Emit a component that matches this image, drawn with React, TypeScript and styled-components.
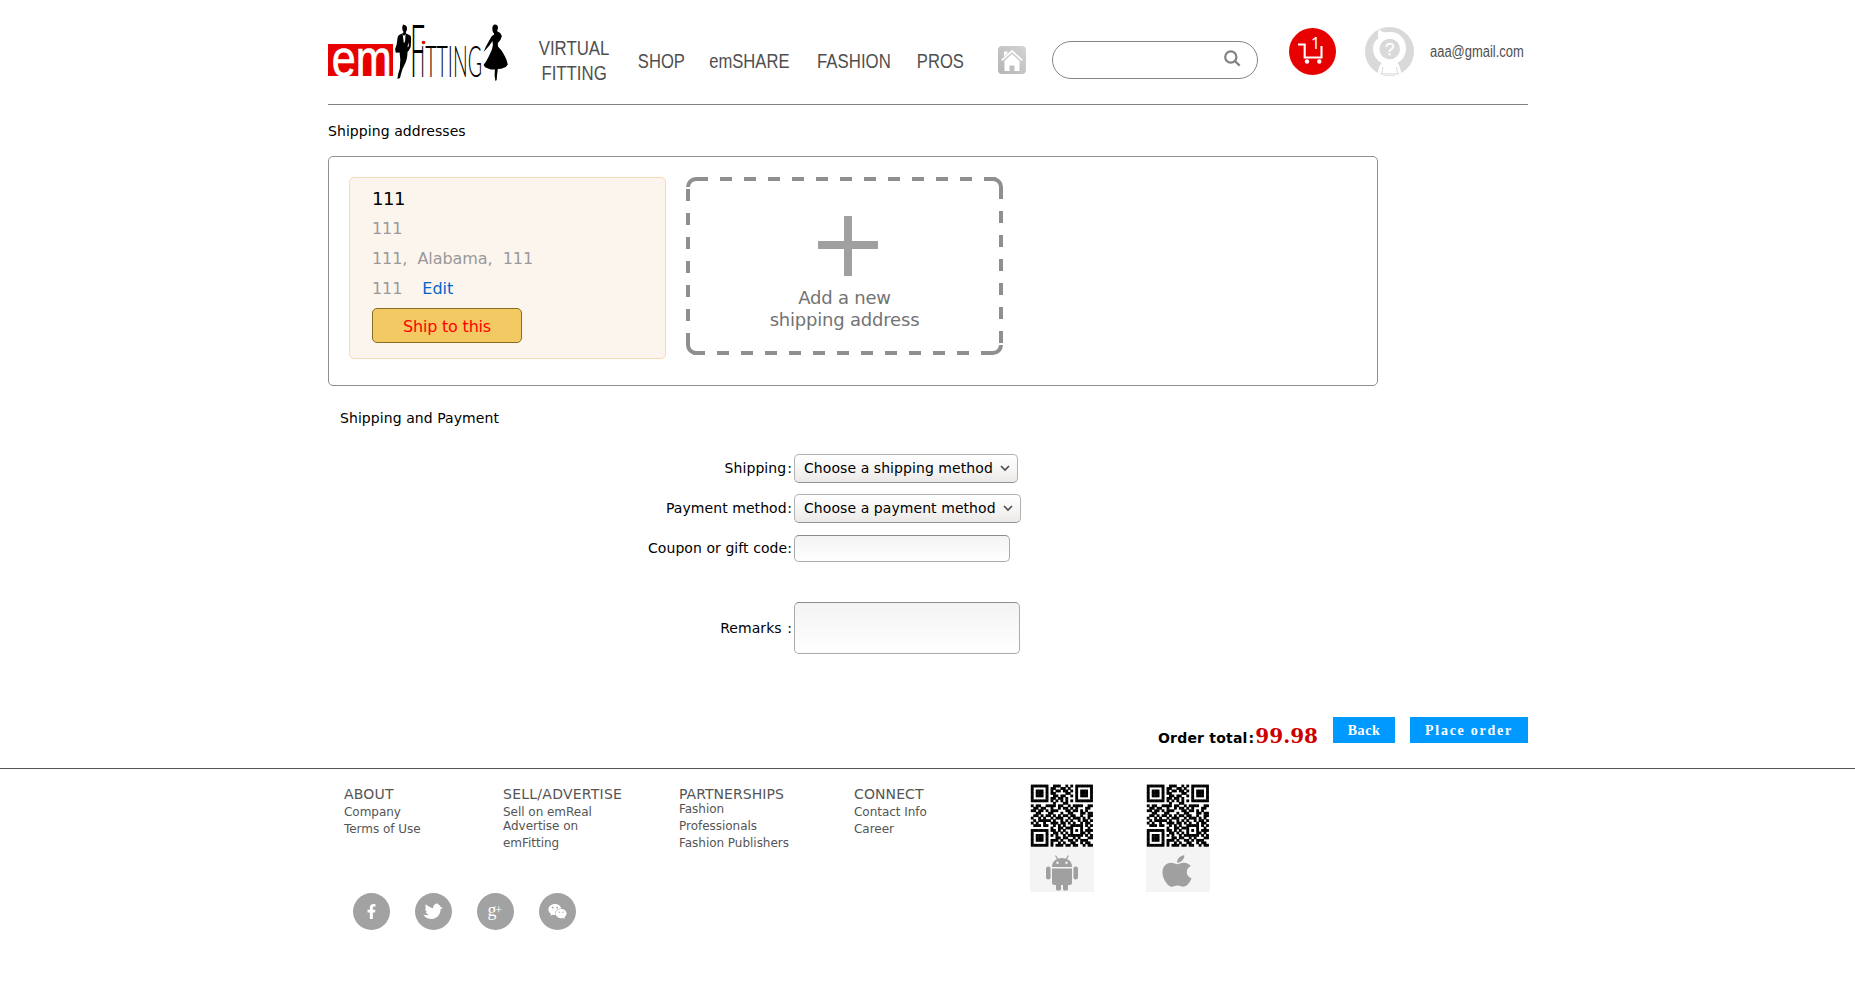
import React from "react";
import styled, { createGlobalStyle } from "styled-components";
import { FaApple, FaFacebookF, FaWeixin } from "react-icons/fa";

const GlobalStyle = createGlobalStyle`
  *, *::before, *::after { box-sizing: border-box; }
  body {
    margin: 0;
    background: #fff;
    color: #000;
    font-family: "DejaVu Sans", sans-serif;
    font-size: 14px;
    letter-spacing: 0.07px;
  }
  a { color: inherit; text-decoration: none; }
`;

const Container = styled.div`
  width: 1200px;
  margin: 0 auto;
  position: relative;
  left: 0.5px;
`;

const Header = styled.header`
  display: flex;
  align-items: flex-start;
  height: 105px;
  border-bottom: 1px solid #828282;
  & > * { flex-shrink: 0; }
`;

const LogoLink = styled.a`
  display: block;
  margin-top: 22px;
  width: 184px;
  height: 60px;
`;

const Nav = styled.nav`
  display: flex;
  align-items: flex-start;
  width: 486px;
  font-family: "Liberation Sans", sans-serif;
  font-size: 20px;
  line-height: 25px;
  letter-spacing: 0;
  color: #4f4f4f;
`;

const NavLink = styled.a<{ $left: number; $width: number; $top?: number }>`
  display: flex;
  justify-content: center;
  flex-shrink: 0;
  margin: ${(p) => p.$top ?? 49}px 0 0 ${(p) => p.$left}px;
  width: ${(p) => p.$width}px;
  text-align: center;
  white-space: nowrap;
`;

const Condensed = styled.span<{ $scale?: number; $origin?: string }>`
  display: block;
  flex-shrink: 0;
  transform: scaleX(${(p) => p.$scale ?? 0.83});
  transform-origin: ${(p) => p.$origin ?? "center"};
`;

const HomeLink = styled.a`
  display: block;
  width: 28px;
  height: 28px;
  margin-top: 46px;
`;

const SearchBox = styled.label`
  display: flex;
  align-items: center;
  justify-content: flex-end;
  width: 206px;
  height: 38px;
  margin: 41px 0 0 26px;
  padding: 0 16px 3px 0;
  border: 1px solid #858585;
  border-radius: 19px;
`;

const SearchInput = styled.input`
  flex: 1;
  min-width: 0;
  margin-left: 16px;
  border: 0;
  outline: 0;
  background: none;
`;

const CartLink = styled.a`
  position: relative;
  display: block;
  width: 47px;
  height: 47px;
  margin: 28px 0 0 31px;
`;

const CartCount = styled.span`
  position: absolute;
  left: 22px;
  top: 5px;
  color: #fff;
  font-family: "Noto Sans", sans-serif;
  font-size: 16px;
  line-height: 20px;
`;

const AvatarLink = styled.a`
  display: block;
  width: 49px;
  height: 49px;
  margin: 27px 0 0 29px;
`;

const Email = styled.a`
  width: 95px;
  margin: 40px 0 0 16px;
  font-family: "Liberation Sans", sans-serif;
  font-size: 16px;
  line-height: 24px;
  letter-spacing: 0;
  color: #4f4f4f;
`;

const SectionTitle = styled.h2<{ $indent?: number; $top: number }>`
  margin: ${(p) => p.$top}px 0 0 ${(p) => p.$indent ?? 0}px;
  font-size: 14px;
  line-height: 20px;
  font-weight: 400;
`;

const AddressPanel = styled.section`
  display: flex;
  align-items: flex-start;
  gap: 20px;
  width: 1050px;
  height: 230px;
  margin-top: 15px;
  padding: 20px;
  border: 1px solid #909090;
  border-radius: 5px;
`;

const AddressCard = styled.article`
  width: 317px;
  height: 182px;
  padding: 6px 22px;
  background: #fcf5ee;
  border: 1px solid #fbd8b4;
  border-radius: 5px;
  letter-spacing: -0.2px;
`;

const AddressName = styled.p`
  margin: 0;
  font-size: 18px;
  line-height: 30px;
  letter-spacing: -0.4px;
`;

const AddressLine = styled.p`
  margin: 0;
  font-size: 16px;
  line-height: 30px;
  letter-spacing: -0.06px;
  color: #999;
  white-space: pre;
`;

const EditLink = styled.a`
  margin-left: 20px;
  color: #0066cc;
`;

const ShipButton = styled.button`
  display: block;
  width: 150px;
  height: 35px;
  margin: 4px 0 0;
  padding: 2px 0 0;
  border: 1px solid #8a6d22;
  border-radius: 5px;
  background: #f3c963;
  color: #f00;
  font: 16px/31px "DejaVu Sans", sans-serif;
  letter-spacing: -0.2px;
`;

const NewAddress = styled.button`
  position: relative;
  display: flex;
  flex-direction: column;
  align-items: center;
  width: 317px;
  height: 178px;
  padding: 39px 0 0;
  border: 0;
  border-radius: 10px;
  background: #fff;
  color: #737373;
  font: 18px/22px "DejaVu Sans", sans-serif;
  letter-spacing: -0.2px;
`;

const DashedOutline = styled.svg`
  position: absolute;
  inset: 0;
`;

const PlusIcon = styled.svg`
  display: block;
  width: 60px;
  height: 60px;
  margin: 0 0 11px 7px;
`;

const Form = styled.form`
  margin-top: 20px;
`;

const FormRow = styled.div<{ $height?: number }>`
  display: flex;
  align-items: center;
  height: ${(p) => p.$height ?? 40}px;
`;

const Label = styled.label`
  width: 466px;
  padding-right: 2px;
  text-align: right;
  line-height: 20px;
`;

const Colon = styled.span<{ $gap?: number }>`
  margin-left: ${(p) => p.$gap ?? 0}px;
`;

const SelectBox = styled.div<{ $width: number }>`
  display: flex;
  align-items: center;
  justify-content: space-between;
  width: ${(p) => p.$width}px;
  height: 29px;
  padding: 0 7px 0 9px;
  border: 1px solid #b2b2b2;
  border-bottom-color: #939393;
  border-radius: 5px;
  background: linear-gradient(#fff, #f6f5f4 55%, #eae9e7);
  white-space: nowrap;
`;

const TextInput = styled.input`
  width: 216px;
  height: 27px;
  margin: 1px 0 0;
  border: 1px solid #ababab;
  border-top-color: #8c8c8c;
  border-radius: 5px;
  background: linear-gradient(#f3f3f3, #fff);
`;

const Remarks = styled.textarea`
  display: block;
  width: 226px;
  height: 52px;
  border: 1px solid #ababab;
  border-top-color: #8c8c8c;
  border-radius: 5px;
  background: linear-gradient(#f3f3f3, #fff);
  resize: none;
`;

const OrderBar = styled.div`
  display: flex;
  align-items: flex-start;
  justify-content: flex-end;
  height: 51px;
  margin-top: 29px;
`;

const OrderTotal = styled.p`
  display: flex;
  align-items: baseline;
  margin: 3px 15px 0 0;
  font-weight: 700;
  line-height: 32px;
  letter-spacing: 0.2px;
`;

const Amount = styled.strong`
  margin-left: 1px;
  color: #c00;
  font-family: "DejaVu Serif", serif;
  font-size: 20px;
  letter-spacing: 0;
`;

const ActionButton = styled.button<{ $width: number; $gap?: number; $tracking: number }>`
  width: ${(p) => p.$width}px;
  height: 26px;
  margin: 0 0 0 ${(p) => p.$gap ?? 0}px;
  padding: 1px 0 0;
  border: 0;
  background: #09f;
  color: #fff;
  font: 700 14px/25px "Liberation Serif", serif;
  letter-spacing: ${(p) => p.$tracking}px;
`;

const Footer = styled.footer`
  border-top: 1px solid #555;
`;

const FooterColumns = styled.div`
  display: flex;
  align-items: flex-start;
  height: 124px;
  padding-left: 16px;
  color: #555;
`;

const FooterColumn = styled.section<{ $width: number }>`
  width: ${(p) => p.$width}px;
  padding-top: 15px;
`;

const FooterTitle = styled.h3<{ $tracking?: number }>`
  margin: 0;
  font-size: 14px;
  line-height: 20px;
  font-weight: 400;
  letter-spacing: ${(p) => p.$tracking ?? 0.1}px;
`;

const FooterLinks = styled.div<{ $top?: number }>`
  margin-top: ${(p) => p.$top ?? 0}px;
`;

const FooterLink = styled.a<{ $pull?: number }>`
  display: block;
  margin-top: -${(p) => p.$pull ?? 0}px;
  font-size: 12px;
  line-height: 17px;
  letter-spacing: -0.03px;
  white-space: nowrap;
`;

const AppCard = styled.div`
  width: 64px;
  margin: 15px 52px 0 0;
`;

const QrCode = styled.svg`
  display: block;
  width: 64px;
  height: 63px;
`;

const Platform = styled.div`
  display: flex;
  justify-content: center;
  height: 45px;
  background: #f4f4f4;
  color: #a0a0a0;
`;

const SocialRow = styled.div`
  display: flex;
  gap: 25px;
  padding-left: 24.5px;
`;

const SocialLink = styled.a`
  display: flex;
  align-items: center;
  justify-content: center;
  width: 37px;
  height: 37px;
  border-radius: 50%;
  background: #a2a2a2;
  color: #fff;
`;

const LogoArt = styled.svg`
  display: block;
  overflow: visible;
`;

const Logo = () => (
  <LogoArt width="184" height="60" viewBox="0 0 184 60">
    <rect x="0" y="22" width="65" height="32" fill="#e60000" />
    <text transform="translate(3.800 53.500) scale(.83 1)" fontFamily="Liberation Sans" fontSize="52" fill="#fff" stroke="#fff" strokeWidth=".7">em</text>
    <path fill="#000" d="M76 3c2 0 3 1.500 3 3.500 0 2-.6 3-1.200 3.700l.4 1.300 4 2c1 .7 1 3 .8 6l-.3 5.500-2.200 4-1 1c0 8-2.500 12-5 17l-1.500 5-1 4-2.500 1 .5-4.500 1.800-6 .5-9-.7-7-3.800.2-.7-3.500 1.600-5 .8-6c.2-2 1-3.300 3-4l2.700-1.200.3-1.200c-1.700-2-1.700-7 .5-7.600z" />
    <path fill="#fff" d="M74.600 12l1.400 2 1.600-2-.5 7-1.200 2.500z" />
    <path fill="#fff" d="M80.500 20l.3 4-1.300 1.500z" />
    <text transform="translate(82 54.500) scale(.37 1)" fontFamily="Lato" fontWeight="300" fontSize="72" fill="#000">F</text>
    <text transform="translate(92 54.500) scale(.455 1)" fontFamily="Lato" fontWeight="300" fontSize="43" fill="#000">ITTING</text>
    <circle cx="95.500" cy="20.500" r="1.800" fill="#e60000" />
    <path fill="#000" d="M167 2.500c2 0 3.200 1.500 3 3.500-.2 1.700-.9 2.200-.8 3.200l3 1.700 1.700 3-1.500 4-2.600 3 .2 3.500c4 4 8.500 11 9.800 18l-2 2.500-4.500 1.800-3.500.3-.7 5.500-.4 5.500-1.300 1-.8-5.500.3-6-4.200 0-5.600-2.300-1.500-2.200c4-5.500 6.500-11 8.500-16l.8-4-.5-4-3 4.500-4 4.500-1.800 2 2.300-5.500 5-9c.8-1.500 1.700-2.300 3.200-2.800l-.2-1.500c-2-1.500-2.500-8.700 1.100-8.700z" />
  </LogoArt>
);

const HomeIcon = () => (
  <svg width="28" height="28" viewBox="0 0 28 28">
    <defs>
      <linearGradient id="homeFill" x1="1" y1="0" x2="0" y2="1">
        <stop offset="0" stopColor="#d4d4d4" />
        <stop offset="1" stopColor="#b5b5b5" />
      </linearGradient>
    </defs>
    <rect width="28" height="28" rx="4" fill="url(#homeFill)" />
    <path d="M3.700 14.300L14 5l10.300 9.300" fill="none" stroke="#fff" strokeWidth="1.700" />
    <path d="M6 5.500h3.500v1.800L6 10.500zM14 8l7.500 6.800V25h-5v-5.500h-5V25h-5V14.800z" fill="#fff" />
  </svg>
);

const SearchIcon = () => (
  <svg width="17" height="17" viewBox="0 0 17 17" fill="none" stroke="#808080" strokeWidth="2.200">
    <circle cx="6.800" cy="7" r="5.600" />
    <path d="M10.800 11l4.900 4.600" />
  </svg>
);

const CartIcon = () => (
  <svg width="47" height="47" viewBox="0 0 47 47">
    <circle cx="23.500" cy="23.500" r="23.500" fill="#e60000" />
    <path d="M9 16.500h6.700v13h16.800V18" fill="none" stroke="#fff" strokeWidth="2.100" />
    <circle cx="18" cy="33.500" r="2.200" fill="#fff" />
    <circle cx="30.300" cy="33.500" r="2.200" fill="#fff" />
  </svg>
);

const AvatarIcon = () => (
  <svg width="49" height="49" viewBox="0 0 49 49">
    <circle cx="24.500" cy="24.500" r="24.500" fill="#d9d9d9" />
    <path fill="#fff" d="M14.500 2c1.500 3 4.500 3.500 8 3.300C33 3.500 41 11 41 21.500c0 7-3.500 11.500-8.500 14.500 2 2.500 3.200 6 3.800 10-7 3-17 3-23.600 0 .6-4 1.800-7.500 3.800-10C11.500 33 8 28.500 8 21.500c0-4.500 2-8 5.500-10.500-1.200-3-1-6 1-9z" />
    <path d="M18 40l-1.500 7M31.500 40l1.500 7M17 46.800h15.500" fill="none" stroke="#d9d9d9" strokeWidth="1" />
    <circle cx="24.700" cy="22" r="10.300" fill="#d9d9d9" />
    <text x="24.700" y="28.300" textAnchor="middle" fontFamily="Liberation Sans" fontSize="17" fill="#fff" stroke="#fff" strokeWidth=".4">?</text>
  </svg>
);

const Chevron = () => (
  <svg width="10" height="7" viewBox="0 0 10 7" fill="none" stroke="#4a4a4a" strokeWidth="1.600">
    <path d="M1 1l4 4 4-4" />
  </svg>
);

const qrRows = [
  "1111111001110010101111111",
  "1000001011001101001000001",
  "1011101010110110101011101",
  "1011101011000011001011101",
  "1011101001101100101011101",
  "1000001011011010001000001",
  "1111111010101010101111111",
  "0000000001000110000000000",
  "1011001111011001011110011",
  "0110110010010110101000110",
  "1101101011100011011010100",
  "0011000110001001100011011",
  "0110101101010110110010011",
  "1001010010111001011101010",
  "0101111101001010100101101",
  "1010010011101101010010110",
  "0111011001010100111110101",
  "0000000010011011100010010",
  "1111111011010100101010111",
  "1000001001101010100011010",
  "1011101010100101111110101",
  "1011101000110110010100011",
  "1011101011101001101011100",
  "1000001010010100110010110",
  "1111111010111011011001011",
];

const Qr = () => (
  <QrCode viewBox="0 0 64 63">
    <g transform="translate(.8 .600) scale(2.470)">
      {qrRows.map((row, y) =>
        [...row].map((cell, x) =>
          cell === "1" ? <rect key={`${x}-${y}`} x={x} y={y} width="1.150" height="1.150" fill="#000" /> : null
        )
      )}
    </g>
  </QrCode>
);

const AndroidIcon = () => (
  <svg width="34" height="37" viewBox="0 0 34 37" fill="currentColor">
    <path d="M10.500 1.500l2.200 3.600M23.500 1.500l-2.200 3.600" stroke="currentColor" strokeWidth="1.200" />
    <path d="M7 13C7 7.500 11 4 17 4s10 3.500 10 9z" />
    <circle cx="12.500" cy="8.800" r="1.200" fill="#f4f4f4" />
    <circle cx="21.500" cy="8.800" r="1.200" fill="#f4f4f4" />
    <path d="M7 14.500h20V29a2 2 0 0 1-2 2h-2V35a1.500 1.500 0 0 1-1.500 1.500h-2A1.500 1.500 0 0 1 18 35v-4h-2v4a1.500 1.500 0 0 1-1.500 1.500h-2A1.500 1.500 0 0 1 11 35v-4H9a2 2 0 0 1-2-2z" />
    <rect x="1" y="12.500" width="4.600" height="13" rx="2.300" />
    <rect x="28.400" y="12.500" width="4.600" height="13" rx="2.300" />
  </svg>
);

const AndroidSlot = styled.span`
  margin-top: 7px;
  height: 37px;
`;

const AppleSlot = styled.span`
  margin: 6px 0 0 -2px;
  height: 37px;
`;

const WideApple = styled(FaApple)`
  transform: scaleX(1.1);
`;

const BirdIcon = () => (
  <svg width="20" height="17" viewBox="0 0 20 17" fill="#fff">
    <path d="M2.800 1.200C5 3.300 7.500 4.600 10 5.200c.2-2.400 1.700-4.600 3.600-4.600.5 0 1.600.4 2 1.200.8 0 1.500.9 1.600 1.700.8.5 1.600 1 2.600 1.400-.8.500-1.500.8-2.200 1.200.2 4.800-3.300 9.900-8.800 9.900-3.400 0-7-1.300-8.500-4.500 1.800.8 3.800.8 5.200-.1C4 11 3 10 2.800 8.900l1.200-.1C2.800 8 2.200 6.900 2.100 5.500l1.100.3C2.300 4.500 2.200 2.700 2.800 1.200z" />
  </svg>
);

const GooglePlus = () => (
  <svg width="20" height="20" viewBox="0 0 20 20" fill="#fff" fontFamily="Liberation Serif">
    <text x="2.500" y="14" fontSize="18">g</text>
    <text x="10" y="12" fontSize="13">+</text>
  </svg>
);

export default function App() {
  return (
    <>
      <GlobalStyle />
      <Container>
        <Header>
          <LogoLink href="#"><Logo /></LogoLink>
          <Nav>
            <NavLink href="#" $left={25} $width={74} $top={36}><Condensed $scale={0.84}>VIRTUAL<br />FITTING</Condensed></NavLink>
            <NavLink href="#" $left={27} $width={47}><Condensed>SHOP</Condensed></NavLink>
            <NavLink href="#" $left={24} $width={80}><Condensed>emSHARE</Condensed></NavLink>
            <NavLink href="#" $left={28} $width={73}><Condensed $scale={0.84}>FASHION</Condensed></NavLink>
            <NavLink href="#" $left={27} $width={47}><Condensed>PROS</Condensed></NavLink>
          </Nav>
          <HomeLink href="#"><HomeIcon /></HomeLink>
          <SearchBox>
            <SearchInput aria-label="Search" />
            <SearchIcon />
          </SearchBox>
          <CartLink href="#"><CartIcon /><CartCount>1</CartCount></CartLink>
          <AvatarLink href="#"><AvatarIcon /></AvatarLink>
          <Email href="#"><Condensed $scale={0.81} $origin="left">aaa@gmail.com</Condensed></Email>
        </Header>

        <SectionTitle $top={16}>Shipping addresses</SectionTitle>
        <AddressPanel>
          <AddressCard>
            <AddressName>111</AddressName>
            <AddressLine>111</AddressLine>
            <AddressLine>{"111,  Alabama,  111"}</AddressLine>
            <AddressLine>111<EditLink href="#">Edit</EditLink></AddressLine>
            <ShipButton type="button">Ship to this</ShipButton>
          </AddressCard>
          <NewAddress type="button">
            <DashedOutline width="317" height="178" viewBox="0 0 317 178" fill="none" stroke="#8f8f8f" strokeWidth="4">
              <path strokeDasharray="12 12" d="M10 2H310" />
              <path strokeDasharray="12 12" d="M7 176H307" />
              <path strokeDasharray="12 12" d="M2 12V168" />
              <path strokeDasharray="12 12" d="M315 10V166" />
              <path d="M2 10a8 8 0 0 1 8-8M307 2a8 8 0 0 1 8 8M2 168a8 8 0 0 0 8 8M307 176a8 8 0 0 0 8-8" />
            </DashedOutline>
            <PlusIcon viewBox="0 0 60 60" fill="#a0a0a0">
              <path d="M26 0h8v25h26v8H34v27h-8V33H0v-8h26z" />
            </PlusIcon>
            <span>Add a new<br />shipping address</span>
          </NewAddress>
        </AddressPanel>

        <SectionTitle $top={22} $indent={12}>Shipping and Payment</SectionTitle>
        <Form>
          <FormRow>
            <Label>Shipping<Colon $gap={1}>:</Colon></Label>
            <SelectBox $width={224}>Choose a shipping method<Chevron /></SelectBox>
          </FormRow>
          <FormRow>
            <Label>Payment method<Colon $gap={0.5}>:</Colon></Label>
            <SelectBox $width={227}>Choose a payment method<Chevron /></SelectBox>
          </FormRow>
          <FormRow>
            <Label>Coupon or gift code:</Label>
            <TextInput aria-label="Coupon or gift code" />
          </FormRow>
          <FormRow $height={120}>
            <Label>Remarks<Colon $gap={5.5}>:</Colon></Label>
            <Remarks aria-label="Remarks" />
          </FormRow>
        </Form>

        <OrderBar>
          <OrderTotal>Order total<Colon $gap={1}>:</Colon><Amount>99.98</Amount></OrderTotal>
          <ActionButton type="button" $width={62} $tracking={0.6}>Back</ActionButton>
          <ActionButton type="button" $width={118} $gap={15} $tracking={1.75}>Place order</ActionButton>
        </OrderBar>
      </Container>

      <Footer>
        <Container>
          <FooterColumns>
            <FooterColumn $width={159}>
              <FooterTitle $tracking={0.2}>ABOUT</FooterTitle>
              <FooterLinks>
                <FooterLink href="#">Company</FooterLink>
                <FooterLink href="#">Terms of Use</FooterLink>
              </FooterLinks>
            </FooterColumn>
            <FooterColumn $width={176}>
              <FooterTitle $tracking={0.25}>SELL/ADVERTISE</FooterTitle>
              <FooterLinks>
                <FooterLink href="#">Sell on emReal</FooterLink>
                <FooterLink href="#" $pull={3}>Advertise on<br />emFitting</FooterLink>
              </FooterLinks>
            </FooterColumn>
            <FooterColumn $width={175}>
              <FooterTitle $tracking={0.05}>PARTNERSHIPS</FooterTitle>
              <FooterLinks $top={-3}>
                <FooterLink href="#">Fashion<br />Professionals</FooterLink>
                <FooterLink href="#">Fashion Publishers</FooterLink>
              </FooterLinks>
            </FooterColumn>
            <FooterColumn $width={176}>
              <FooterTitle>CONNECT</FooterTitle>
              <FooterLinks>
                <FooterLink href="#">Contact Info</FooterLink>
                <FooterLink href="#">Career</FooterLink>
              </FooterLinks>
            </FooterColumn>
            <AppCard>
              <Qr />
              <Platform><AndroidSlot><AndroidIcon /></AndroidSlot></Platform>
            </AppCard>
            <AppCard>
              <Qr />
              <Platform><AppleSlot><WideApple size={36} /></AppleSlot></Platform>
            </AppCard>
          </FooterColumns>
          <SocialRow>
            <SocialLink href="#"><FaFacebookF size={15} /></SocialLink>
            <SocialLink href="#"><BirdIcon /></SocialLink>
            <SocialLink href="#"><GooglePlus /></SocialLink>
            <SocialLink href="#"><FaWeixin size={19} /></SocialLink>
          </SocialRow>
        </Container>
      </Footer>
    </>
  );
}
